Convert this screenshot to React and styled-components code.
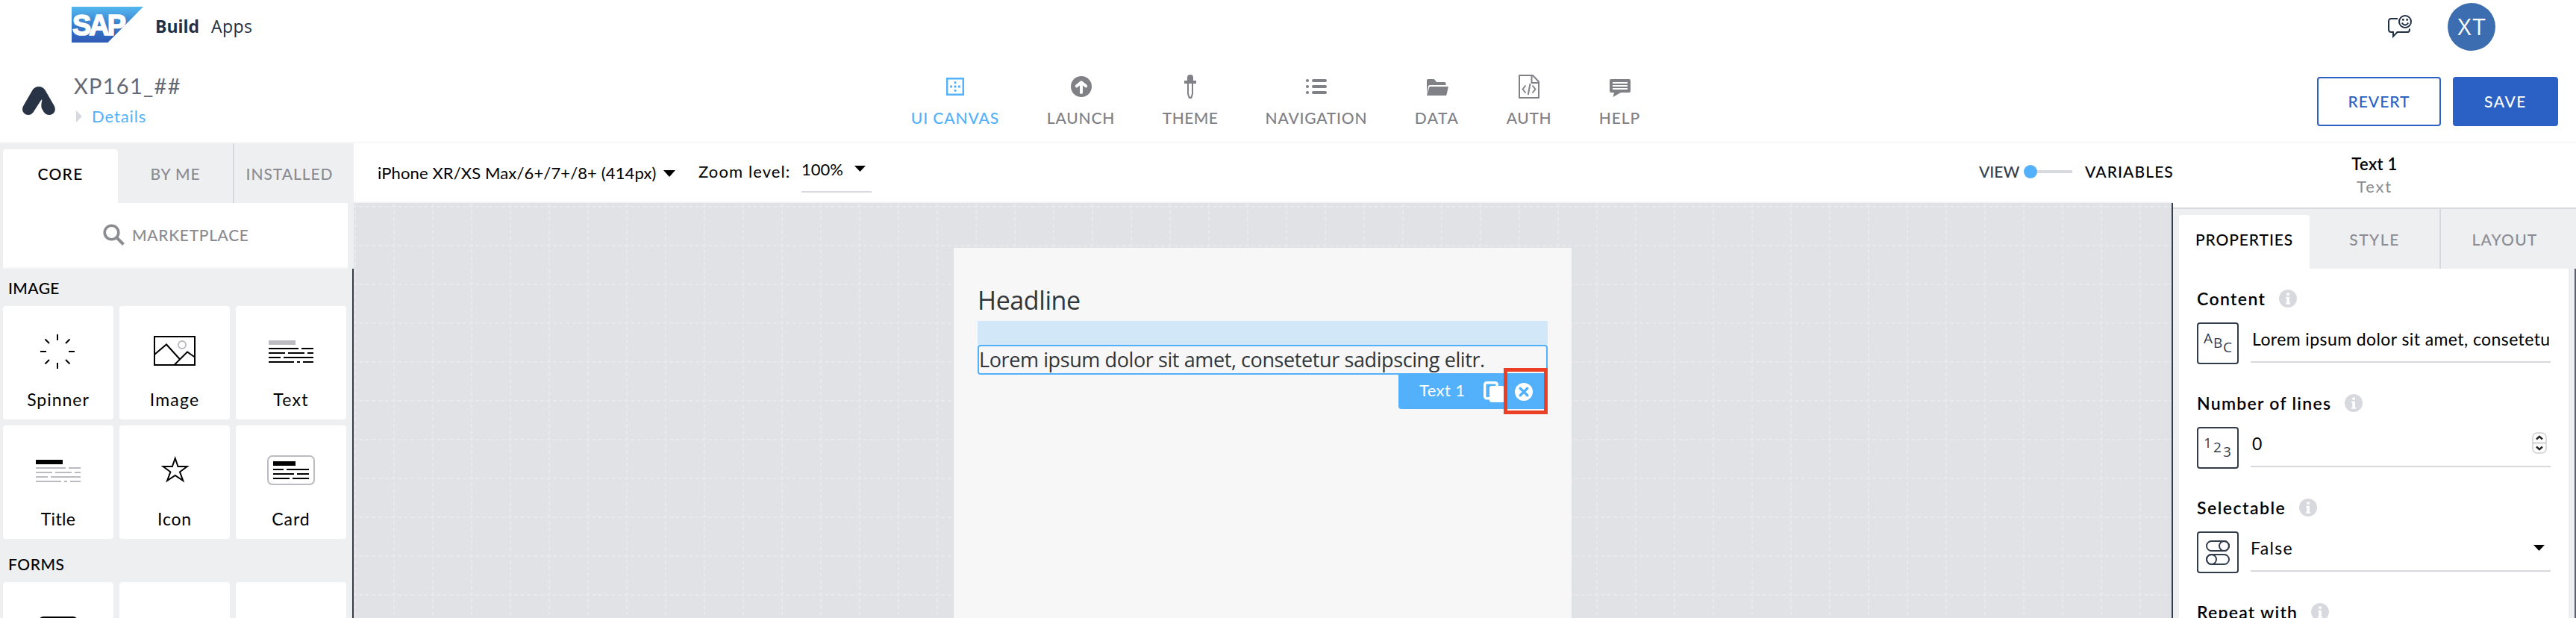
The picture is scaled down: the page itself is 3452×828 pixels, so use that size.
import React from 'react';
import styled, { createGlobalStyle, css } from 'styled-components';

const UI = `Lato, "Open Sans", sans-serif`;
const SYS = `"Open Sans", "Noto Sans", sans-serif`;
const c = {
  ink: '#000', navy: '#333d4c', grey: '#808187', tab: '#8b8c91', blue: '#52b1fa', action: '#2b61c5',
  line: '#d8d9de', panel: '#eeeff1', canvas: '#e1e2e6', soft: '#bbbbc1',
};
const type = (size, weight = 400, family = UI) => css`
  font-family: ${family};
  font-size: ${size}px;
  font-weight: ${weight};
  letter-spacing: ${(p) => p.$track ?? 0}px;
  white-space: nowrap;
`;

const Global = createGlobalStyle`
  *, *::before, *::after { box-sizing: border-box; }
  body { margin: 0; background: #fff; overflow: hidden; }
  svg { display: block; flex: none; overflow: visible; }
`;

const Page = styled.div`
  width: 3452px; height: 828px; overflow: hidden; display: flex; flex-direction: column;
  background: #fff; color: ${c.ink};
`;

/* shell bar */
const ShellBar = styled.header`
  height: 72px; flex: none; display: flex; align-items: center; padding: 0 108px 0 96px;
`;
const LogoSlot = styled.div`padding-bottom: 6px;`;
const ProductName = styled.strong`
  ${type(23, 700, SYS)} color: #223044; line-height: 30px; margin: 0 0 2px 16px; width: 75px;
`;
const ProductArea = styled.span`
  ${type(23, 400, SYS)} color: #223044; line-height: 30px; margin-bottom: 2px;
`;
const ShellActions = styled.div`display: flex; align-items: center; gap: 48px; margin-left: auto;`;
const Avatar = styled.div`
  ${type(31, 400, SYS)} width: 64px; height: 64px; border-radius: 50%; background: #3c6db0; color: #fff;
  display: flex; align-items: center; justify-content: center; padding: 0 0 3px 2px;
`;

/* app bar */
const AppBar = styled.div`
  height: 120px; flex: none; display: grid; grid-template-columns: 1222px 1fr auto;
  border-bottom: 2px solid #f7f7f8; padding-right: 24px;
`;
const AppIdentity = styled.div`display: flex; padding-left: 30px; gap: 25px;`;
const AppMark = styled.div`padding-top: 44px;`;
const AppTitle = styled.h1`${type(29)} margin: 26px 0 0; line-height: 34px; color: #666973;`;
const DetailsLink = styled.a`
  ${type(22)} display: flex; align-items: center; gap: 13px; line-height: 28px; margin-top: 10px;
  padding-left: 3px; color: ${c.blue};
`;
const Nav = styled.nav`display: flex; gap: 66px; padding-top: 28px;`;
const NavItem = styled.a`
  ${type(21, 500)} width: ${(p) => p.$width}px; display: flex; flex-direction: column; align-items: center;
  gap: 12px; line-height: 28px; color: ${(p) => (p.$active ? c.blue : c.grey)};
`;
const Actions = styled.div`display: flex; gap: 16px; padding-top: 31px;`;
const Button = styled.button`
  ${type(21, 500)} width: ${(p) => p.$width}px; height: 66px; border-radius: 4px; padding: 0 0 2px;
  border: 2px solid ${c.action};
  background: ${(p) => (p.$primary ? c.action : '#fff')}; color: ${(p) => (p.$primary ? '#fff' : c.action)};
`;

/* body columns */
const Body = styled.div`flex: 1; min-height: 0; display: grid; grid-template-columns: 474px 2438px 540px;`;

const TabStrip = styled.div`
  display: grid; grid-template-columns: ${(p) => p.$columns}; height: 80px; background: ${c.panel};
  padding-left: ${(p) => p.$inset}px;
`;
const Tab = styled.div`
  ${type(21, 500)} display: flex; align-items: center; justify-content: center; color: ${c.tab};
  ${(p) => p.$divided && css`border-right: 2px solid ${c.line};`}
  ${(p) => p.$active && css`
    color: #000; background: #fff; margin-top: 8px; padding-bottom: 8px; border-radius: 4px 4px 0 0;
  `}
`;

const Library = styled.aside`
  background: ${c.panel}; overflow: hidden; display: flex; flex-direction: column;
`;
const Marketplace = styled.div`
  ${type(21, 500)} flex: none; height: 88px; margin: 0 8px 0 4px; background: #fff; border-bottom: 2px solid #f8f8f9;
  color: ${c.tab}; display: flex; align-items: center; gap: 10px; padding: 0 0 2px 134px;
`;
const LibraryList = styled.div`flex: 1; border-right: 2px solid ${c.navy}; min-height: 0; overflow: hidden;`;
const SectionTitle = styled.h2`
  ${type(21, 500)} margin: 0; padding: 2px 0 0 11px; line-height: 48px; height: 50px;
`;
const TileGrid = styled.div`
  display: grid; grid-template-columns: repeat(3, 148px); grid-auto-rows: 152px; gap: 8px;
  padding: 0 0 8px 4px;
`;
const Tile = styled.div`
  background: #fff; border-radius: 4px; display: flex; flex-direction: column; align-items: center; padding-top: 30px;
`;
const TileLabel = styled.span`${type(23)} line-height: 30px; margin-top: 20px;`;

/* canvas */
const Stage = styled.main`display: flex; flex-direction: column; min-width: 0;`;
const StageBar = styled.div`
  height: 80px; flex: none; display: flex; align-items: flex-start; padding-left: 32px;
  border-bottom: 2px solid #f5f5f9;
`;
const DevicePicker = styled.div`
  ${type(22)} width: 397px; line-height: 80px; display: flex; align-items: center; gap: 9px; margin-right: 33px;
`;
const ZoomLabel = styled.span`${type(22)} line-height: 75px; width: 138px;`;
const ZoomValue = styled.div`
  ${type(22)} line-height: 69px; width: 94px; height: 66px; border-bottom: 2px solid ${c.line};
  display: flex; align-items: center; justify-content: space-between; padding-right: 8px; padding-top: 4px;
`;
const ViewSwitch = styled.div`margin-left: auto; display: flex; align-items: center; height: 75px;`;
const SwitchLabel = styled.span`
  ${type(21, 500)} color: ${(p) => (p.$muted ? c.navy : '#000')}; width: ${(p) => p.$width}px;
`;
const SwitchKnob = styled.i`width: 18px; height: 18px; border-radius: 50%; background: ${c.blue};`;
const SwitchTrack = styled.i`width: 47px; height: 4px; background: ${c.line}; margin-right: 17px;`;

const Board = styled.div`
  flex: 1; min-height: 0; position: relative; background: ${c.canvas}; border-right: 2px solid ${c.navy};
  border-left: 0; margin-right: 0; padding: 60px 0 0 804px; overflow: hidden;
`;
const BoardGrid = styled.svg`position: absolute; inset: 0; width: 100%; height: 100%;`;
const Device = styled.section`
  position: relative; width: 828px; height: 100%; background: #f7f7f7; padding: 60px 32px 0; color: #32363a;
`;
const Headline = styled.h3`${type(34, 400, SYS)} margin: 0; line-height: 20px; height: 38px;`;
const DropZone = styled.div`height: 32px; background: #d2e7f8;`;
const SelectedText = styled.div`
  ${type(27, 400, SYS)} height: 40px; line-height: 36px; border: 2px solid ${c.blue}; border-radius: 4px; position: relative;
`;
const SelectionBar = styled.div`
  position: absolute; top: 36px; right: -2px; width: 200px; height: 48px; background: ${c.blue};
  border-radius: 0 0 4px 4px; display: flex; align-items: center; padding: 2px 20px 0 28px; color: #fff;
`;
const SelectionName = styled.span`${type(22)} line-height: 28px; width: 86px; padding-bottom: 4px;`;
const CloseSlot = styled.div`margin-left: 14px;`;
const Highlight = styled.div`
  position: absolute; top: -7px; right: 0; width: 59px; height: 62px; border: 5px solid #ea4025;
`;

/* inspector */
const Inspector = styled.aside`background: #fff; display: flex; flex-direction: column; overflow: hidden;`;
const InspectorHead = styled.div`
  height: 88px; flex: none; border-bottom: 2px solid ${c.line}; display: flex; flex-direction: column;
  align-items: center; padding-top: 13px;
`;
const ComponentName = styled.b`${type(22, 600)} line-height: 30px;`;
const ComponentKind = styled.span`${type(22)} line-height: 30px; color: ${c.tab};`;
const InspectorBody = styled.div`
  flex: 1; min-height: 0; display: flex; background: ${c.panel}; padding-left: 8px; border-right: 2px solid #5b6270;
`;
const Fields = styled.div`width: 522px; background: #fff; padding: 28px 24px 0;`;
const Field = styled.div`height: 140px;`;
const FieldLabel = styled.label`
  ${type(23, 600)} display: flex; align-items: center; gap: 18px; height: 24px; line-height: 24px;
`;
const FieldControl = styled.div`display: flex; gap: 16px; margin-top: 20px;`;
const TypeBox = styled.div`width: 56px; height: 56px; border: 2px solid ${c.navy}; border-radius: 4px;`;
const Value = styled.div`
  ${type(23)} width: 402px; height: 54px; border-bottom: 2px solid ${c.line}; display: flex; align-items: center;
  justify-content: space-between; padding: 0 ${(p) => p.$right ?? 2}px 8px ${(p) => p.$left ?? 2}px; overflow: hidden;
`;

/* drawings */
const Caret = ({ w, h = 9 }) => (
  <svg width={w} height={h} viewBox={`0 0 ${w} ${h}`}><path d={`M0 0H${w}L${w / 2} ${h}Z`} fill="#000" /></svg>
);
const SapLogo = () => (
  <svg width="96" height="48" viewBox="0 0 96 48">
    <defs>
      <linearGradient id="sap" x1="0" y1="0" x2="0" y2="1">
        <stop offset="0" stopColor="#52b8ef" /><stop offset=".55" stopColor="#3779c9" /><stop offset="1" stopColor="#2f5ab5" />
      </linearGradient>
    </defs>
    <path d="M0 0H96L48.5 48H0Z" fill="url(#sap)" />
    <text x="1" y="37.500" fontFamily="Liberation Sans, sans-serif" fontWeight="700" fontSize="39" fill="#fff"
      stroke="#fff" strokeWidth="1.600" textLength="69" lengthAdjust="spacingAndGlyphs" letterSpacing="-3">SAP</text>
  </svg>
);
const FeedbackIcon = () => (
  <svg width="32" height="32" viewBox="0 0 32 32" fill="none" stroke="#223044" strokeWidth="2">
    <path d="M13 5H4.500Q1 5 1 8.500V19.500Q1 23 4.500 23H7V28.800L12.500 23H26Q29 23 29 19.500V18.500" />
    <circle cx="23" cy="9" r="8" />
    <path d="M18.800 10.500Q20.500 13.500 23 13.500T27.200 10.500" strokeWidth="1.800" />
    <circle cx="20.300" cy="6.500" r="1.400" fill="#223044" stroke="none" /><circle cx="25.700" cy="6.500" r="1.400" fill="#223044" stroke="none" />
  </svg>
);
const MarkIcon = () => (
  <svg width="44" height="38" viewBox="0 0 44 38">
    <path fill="#283445" d="M13.500 4.800C17-1.600 27-1.600 30.500 4.800L42.800 26C46 32.500 41.500 38 36 38C33 38 30.500 36.800 28.700 34L26.300 30C24.700 27 25.500 22 26.300 18.200C26.200 17.400 25.600 17.400 25 18.300L14.500 34.500C12.500 37 10.500 38 8 38C2 38-2 32 1.200 26Z" />
  </svg>
);
const SearchIcon = () => (
  <svg width="29" height="29" viewBox="0 0 29 29" fill="none" stroke={c.tab}>
    <circle cx="11.500" cy="11.500" r="9.300" strokeWidth="3.600" /><path d="M18 18L27.500 27.500" strokeWidth="4" />
  </svg>
);

const navIcons = {
  canvas: (
    <g fill="currentColor">
      <path d="M4 4H28V28H4ZM6.400 6.400V25.600H25.600V6.400Z" fillRule="evenodd" />
      <path d="M14.600 14.600h2.800v2.800h-2.800zM9.200 14.600H12v2.800H9.200zM20 14.600h2.800v2.800H20zM14.600 9.200h2.800V12h-2.800zM14.600 20h2.800v2.800h-2.800z" />
    </g>
  ),
  launch: (
    <g>
      <circle cx="16" cy="16" r="14" fill="currentColor" />
      <path d="M16 24V11M9.800 15.300L16 10.200L22.200 15.300" fill="none" stroke="#fff" strokeWidth="4" strokeLinecap="round" strokeLinejoin="round" />
    </g>
  ),
  theme: (
    <g fill="currentColor">
      <path d="M12 8V4Q12 0 16 0T20 4V8H24V12H8V8Z" />
      <path d="M12 12H20V26L18 32H14L12 26ZM14 12V25.500L15.200 29.500H16.800L18 25.500V12Z" fillRule="evenodd" />
    </g>
  ),
  list: (
    <g fill="currentColor">
      {[8, 16, 24].map((y) => (
        <g key={y}><circle cx="4" cy={y} r="2.100" /><rect x="10" y={y - 2} width="20" height="4" rx="2" /></g>
      ))}
    </g>
  ),
  folder: (
    <g fill="currentColor">
      <path d="M2 26V7.500Q2 6 3.500 6H11Q12 6 13 7.200L15 10H26Q27.500 10 27.500 11.500V14H6Q4.500 14 4 15.500Z" />
      <path d="M6.800 16H30Q31 16 30.700 17L28.500 27Q28.200 28 27.200 28H2L5.200 17Q5.600 16 6.800 16Z" />
    </g>
  ),
  auth: (
    <g fill="none" stroke="currentColor" strokeWidth="2" strokeLinejoin="round">
      <path d="M3 1H21L29 9.500V31H3Z" /><path d="M19.500 1V11H29" />
      <path d="M11.500 14.500L7.500 19.500L11.500 24.500M20.500 14.500L24.500 19.500L20.500 24.500M17.500 12L14.800 27" />
    </g>
  ),
  help: (
    <g>
      <path d="M4 6H28Q30 6 30 8V22Q30 24 28 24H17L6.500 30L8 24H4Q2 24 2 22V8Q2 6 4 6Z" fill="currentColor" />
      <path d="M6 11H26M6 15H26M6 19H26" stroke="#fff" strokeWidth="2" />
    </g>
  ),
};
const navItems = [
  ['canvas', 'UI CANVAS', 116, 0.93], ['launch', 'LAUNCH', 89, 0.82], ['theme', 'THEME', 72, 0.41],
  ['list', 'NAVIGATION', 134, 0.79], ['folder', 'DATA', 57, 1.5], ['auth', 'AUTH', 58, 0.67], ['help', 'HELP', 53, 0.93],
];

const TextLines = ({ bar, lines }) => (
  <>
    <path fill={bar} d="M0 16h36v6H0z" />
    <path fill={lines} d="M0 26h40v2H0zM44 26h16v2H44zM0 32h22v2H0zM26 32h22v2H26zM52 32h8v2H52zM0 38h16v2H0zM20 38h40v2H20zM0 44h34v2H0zM38 44h4v2H38zM46 44h14v2H46z" />
  </>
);
const tileArt = {
  Spinner: (
    <path stroke="#000" strokeWidth="2" d="M29 8V16M29 46V54M6 31H14M44 31H52M12.500 14.500L18 20M45.500 14.500L40 20M12.500 47.500L18 42M45.500 47.500L40 42" />
  ),
  Image: (
    <g fill="none" stroke="#000" strokeWidth="2">
      <rect x="3" y="11" width="54" height="38" /><circle cx="40" cy="22" r="5" stroke={c.soft} />
      <path d="M3 35L19 21.500L36.700 41M29.500 49L47 31.500L57 38.500" />
    </g>
  ),
  Text: <TextLines bar={c.soft} lines="#000" />,
  Title: <TextLines bar="#000" lines={c.soft} />,
  Icon: (
    <path fill="none" stroke="#000" strokeWidth="2" d="M30.700 14L34.500 25H46.800L37 32.300L41.300 44L30.700 37L20.100 44L24.400 32.300L14.600 25H26.900Z" />
  ),
  Card: (
    <g>
      <rect x="-1" y="11" width="62" height="38" rx="6" fill="none" stroke={c.soft} strokeWidth="2" />
      <path d="M6 18h30v6H6zM6 28h14v2H6zM24 28h30v2H24zM6 34h28v2H6zM38 34h16v2H38zM6 40h22v2H6zM32 40h22v2H32z" />
    </g>
  ),
  Input: <rect x="4" y="16" width="52" height="28" rx="6" />,
};

const CopyIcon = () => (
  <svg width="28" height="28" viewBox="0 0 28 28">
    <rect x="1.700" y="1.700" width="16.500" height="21" rx="2.500" fill="none" stroke="#fff" strokeWidth="3.400" />
    <rect x="8" y="6" width="20" height="22" rx="3" fill="#fff" />
  </svg>
);
const CloseIcon = () => (
  <svg width="24" height="24" viewBox="0 0 24 24">
    <circle cx="12" cy="12" r="12" fill="#fff" />
    <path d="M7.200 7.200L16.800 16.800M16.800 7.200L7.200 16.800" stroke={c.blue} strokeWidth="3.400" strokeLinecap="round" />
  </svg>
);
const InfoIcon = () => (
  <svg width="24" height="24" viewBox="0 0 24 24">
    <circle cx="12" cy="12" r="12" fill={c.line} />
    <path d="M10.300 4.500h3.600v3.200h-3.600zM9.200 9.700h4.700v8h1.300v2H9.200v-2h1.100v-6H9.200z" fill="#fff" />
  </svg>
);
const Glyphs = ({ chars }) => (
  <svg width="52" height="52" viewBox="2 2 52 52" fontFamily='"Open Sans", sans-serif' fontSize="19" fill={c.navy}>
    <text x="9" y="28">{chars[0]}</text><text x="22" y="34">{chars[1]}</text><text x="35" y="40">{chars[2]}</text>
  </svg>
);
const TogglesIcon = () => (
  <svg width="52" height="52" viewBox="2 2 52 52" fill="none" stroke={c.navy} strokeWidth="2">
    <rect x="13" y="13" width="30" height="13" rx="6.500" /><circle cx="36.500" cy="19.500" r="6.500" />
    <rect x="13" y="31" width="30" height="13" rx="6.500" /><circle cx="19.500" cy="37.500" r="6.500" />
  </svg>
);
const Stepper = () => (
  <svg width="20" height="30" viewBox="0 0 20 30">
    <rect x="1" y="1" width="18" height="27" rx="6" fill="#fff" stroke="#cfcfd1" strokeWidth="1.500" />
    <path d="M1 14.500H19" stroke="#cfcfd1" strokeWidth="2" />
    <path d="M6 9.500L10 5.800L14 9.500M6 19.500L10 23.200L14 19.500" fill="none" stroke="#222" strokeWidth="2.400" />
  </svg>
);

const Tiles = ({ names }) => (
  <TileGrid>
    {names.map(([name, track]) => (
      <Tile key={name}>
        <svg width="60" height="60" viewBox="0 0 60 60">{tileArt[name]}</svg>
        <TileLabel $track={track}>{name}</TileLabel>
      </Tile>
    ))}
  </TileGrid>
);

export default function App() {
  return (
    <Page>
      <Global />
      <ShellBar>
        <LogoSlot><SapLogo /></LogoSlot>
        <ProductName>Build</ProductName>
        <ProductArea $track={0.4}>Apps</ProductArea>
        <ShellActions><FeedbackIcon /><Avatar $track={2}>XT</Avatar></ShellActions>
      </ShellBar>
      <AppBar>
        <AppIdentity>
          <AppMark><MarkIcon /></AppMark>
          <div>
            <AppTitle $track={1.26}>XP161_##</AppTitle>
            <DetailsLink $track={0.9}>
              <svg width="8" height="16" viewBox="0 0 8 16"><path d="M0 0L8 8L0 16Z" fill={c.line} /></svg>
              Details
            </DetailsLink>
          </div>
        </AppIdentity>
        <Nav>
          {navItems.map(([icon, label, width, track], i) => (
            <NavItem key={label} $width={width} $track={track} $active={i === 0}>
              <svg width="32" height="32" viewBox="0 0 32 32">{navIcons[icon]}</svg>
              {label}
            </NavItem>
          ))}
        </Nav>
        <Actions>
          <Button $width={166} $track={1}>REVERT</Button>
          <Button $width={141} $track={1.6} $primary>SAVE</Button>
        </Actions>
      </AppBar>
      <Body>
        <Library>
          <TabStrip $columns="154px 156px 148px" $inset={4}>
            <Tab $active $track={1.3}>CORE</Tab><Tab $divided $track={0.86}>BY ME</Tab><Tab $track={0.94}>INSTALLED</Tab>
          </TabStrip>
          <Marketplace $track={0.67}><SearchIcon />MARKETPLACE</Marketplace>
          <LibraryList>
            <SectionTitle $track={0.4}>IMAGE</SectionTitle>
            <Tiles names={[['Spinner', 0.98], ['Image', 1.2], ['Text', 1.3], ['Title', 0.3], ['Icon', 0.76], ['Card', 0.96]]} />
            <SectionTitle $track={0.54}>FORMS</SectionTitle>
            <TileGrid>
              <Tile><svg width="60" height="60" viewBox="0 0 60 60">{tileArt.Input}</svg></Tile>
              <Tile /><Tile />
            </TileGrid>
          </LibraryList>
        </Library>
        <Stage>
          <StageBar>
            <DevicePicker $track={0.13}>iPhone XR/XS Max/6+/7+/8+ (414px)<Caret w={16} /></DevicePicker>
            <ZoomLabel $track={1.1}>Zoom level:</ZoomLabel>
            <ZoomValue>100%<Caret w={15} h={8} /></ZoomValue>
            <ViewSwitch>
              <SwitchLabel $muted $width={60}>VIEW</SwitchLabel>
              <SwitchKnob /><SwitchTrack />
              <SwitchLabel $width={118} $track={1.1}>VARIABLES</SwitchLabel>
            </ViewSwitch>
          </StageBar>
          <Board>
            <BoardGrid>
              <defs>
                <pattern id="grid" x="1" y="4" width="52" height="52" patternUnits="userSpaceOnUse">
                  <path d="M-2.500 1H54M1-2.500V54" stroke="#e8e9ec" strokeWidth="2" strokeDasharray="5 3.667" />
                </pattern>
              </defs>
              <rect width="100%" height="100%" fill="url(#grid)" />
            </BoardGrid>
            <Device>
              <Headline $track={-0.4}>Headline</Headline>
              <DropZone />
              <SelectedText $track={-0.4}>
                Lorem ipsum dolor sit amet, consetetur sadipscing elitr.
                <SelectionBar>
                  <SelectionName $track={0.4}>Text 1</SelectionName>
                  <CopyIcon /><CloseSlot><CloseIcon /></CloseSlot>
                  <Highlight />
                </SelectionBar>
              </SelectedText>
            </Device>
          </Board>
        </Stage>
        <Inspector>
          <InspectorHead>
            <ComponentName $track={0.3}>Text 1</ComponentName><ComponentKind $track={1.8}>Text</ComponentKind>
          </InspectorHead>
          <TabStrip $columns="175px 176px 171px" $inset={8}>
            <Tab $active $track={0.9}>PROPERTIES</Tab><Tab $divided $track={1.5}>STYLE</Tab><Tab $track={1.2}>LAYOUT</Tab>
          </TabStrip>
          <InspectorBody>
            <Fields>
              <Field>
                <FieldLabel $track={1.4}>Content<InfoIcon /></FieldLabel>
                <FieldControl>
                  <TypeBox><Glyphs chars="ABC" /></TypeBox>
                  <Value $track={0.41}>Lorem ipsum dolor sit amet, consetetu</Value>
                </FieldControl>
              </Field>
              <Field>
                <FieldLabel $track={1.28}>Number of lines<InfoIcon /></FieldLabel>
                <FieldControl><TypeBox><Glyphs chars="123" /></TypeBox><Value $right={5}>0<Stepper /></Value></FieldControl>
              </Field>
              <Field>
                <FieldLabel $track={1.5}>Selectable<InfoIcon /></FieldLabel>
                <FieldControl>
                  <TypeBox><TogglesIcon /></TypeBox>
                  <Value $left={0} $right={8} $track={1.3}>False<Caret w={15} h={8} /></Value>
                </FieldControl>
              </Field>
              <Field><FieldLabel $track={1.24}>Repeat with<InfoIcon /></FieldLabel></Field>
            </Fields>
          </InspectorBody>
        </Inspector>
      </Body>
    </Page>
  );
}
